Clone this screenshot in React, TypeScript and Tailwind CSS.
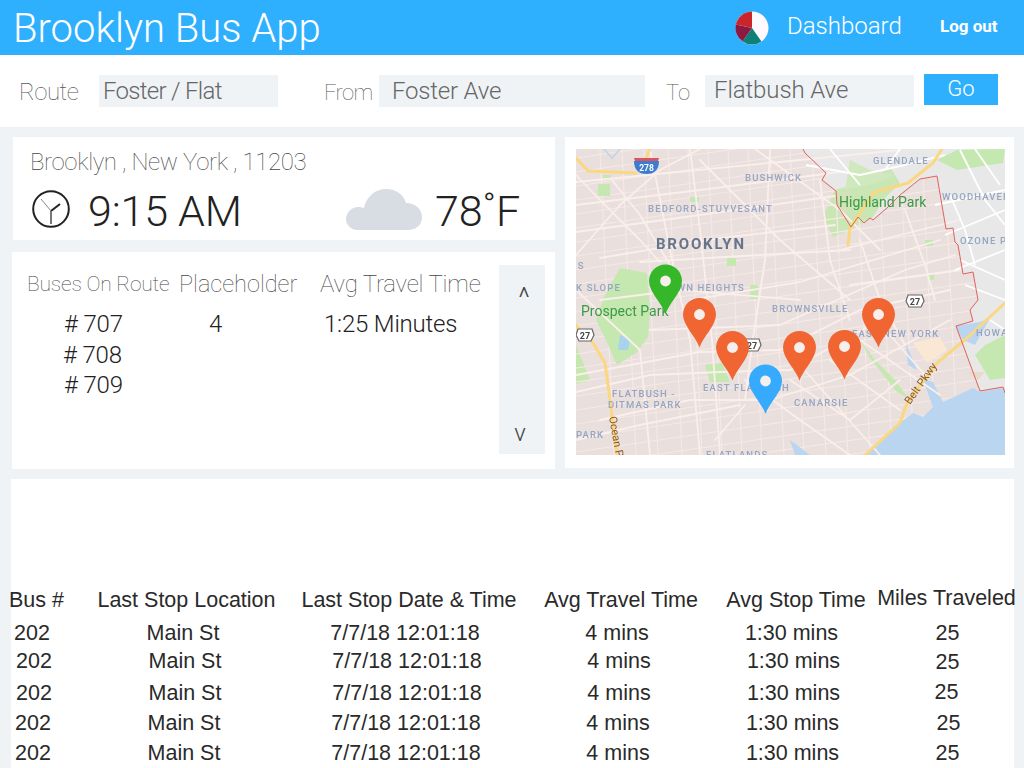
import React from "react";

const roads: string[] = [
  "M576 182L780 162L900 150","M576 205L700 190L840 172","M576 232L700 215L835 196","M600 258L720 238L835 225",
  "M640 262L760 255L850 250","M690 300L800 282L940 240","M650 330L780 325L905 270L955 255","M576 375L700 352L780 350L860 310L950 290",
  "M576 392L650 375L720 372L790 370L880 320","M600 420L690 400L770 400L850 375L950 320","M576 440L640 425L740 405",
  "M690 149L700 230L712 340L720 455","M770 149L765 260L752 345L745 400","M650 149L672 260L690 340L700 455",
  "M612 180L640 215L670 265","M576 255L620 205L660 170L700 149","M576 175L600 200L640 240L660 262","M700 160L780 240L850 300","M755 149L840 210L880 250",
  "M820 180L830 260L850 320","M860 240L880 300L905 345","M905 210L925 265L935 300",
  "M576 290L640 350L650 455","M745 405L715 440","M745 380L800 420L850 455","M790 380L850 420L900 380",
  "M830 360L900 410","M800 365L880 455","M860 340L940 395","M890 335L925 375","M840 250L960 220",
  "M850 285L960 270","M600 300L680 290L800 300",
];
const minorH: number[] = [158,172,186,200,214,228,242,256,270,284,298,312,326,340,354,368,382,396,410,424,438,452,466,480,494,508,522];
const minorV: number[] = [600,622,644,668,688,708,728,748,770,790,812,834,856,878,900,922,944];
const greyRoads: string[] = [
  "M806 165L860 175L905 165L945 155","M830 149L860 185","M935 205L1005 190","M945 235L1005 210","M955 270L1005 250","M965 285L1005 300",
  "M960 150L985 200L1005 225","M975 149L1000 185","M960 260L1005 280","M950 195L965 230L975 265","M900 149L885 170","M990 320L1005 330",
];
const labels: [string, number, number][] = [
  ["BUSHWICK",745,181],["GLENDALE",873,164],["BEDFORD-STUYVESANT",648,212],["WOODHAVEN",942,200],["OZONE P",960,244],
  ["IS",574,269],["K SLOPE",576,291],["BROWNSVILLE",772,312],["EAST NEW YORK",852,337],["HOWA",976,336],
  ["FLATBUSH -",612,397],["DITMAS PARK",608,408],["EAST FLATBUSH",703,391],["CANARSIE",794,406],["PARK",576,438],["FLATLANDS",706,458],
];
const pins: [number, number, string][] = [
  [665.5,281,"#35b729"],[699.5,314.5,"#f06531"],[732.5,347.5,"#f06531"],[799.5,347.5,"#f06531"],[844.5,346.5,"#f06531"],[878.5,314.5,"#f06531"],[765.5,381,"#35aaff"],
];
const boundary = "M803 149L805 153L826 173L822 180L836 191L837 205L851 227L858 217L864 223L870 218L873 220L887 208L900 195L920 179L937 176L946 229L953 228L955 242L958 245L963 274L973 272L978 300L970 310L973 321L956 326L980 391L1003 387L1005 393";

function Shield({ x, y }: { x: number; y: number }) {
  return (
    <g>
      <path d={`M${x-7} ${y-6}h14l2 6l-3 6h-12l-3-6z`} fill="#fff" stroke="#666" strokeWidth="1.2" />
      <text x={x} y={y+3.5} textAnchor="middle" fontSize="9" fontWeight="700" fill="#444" fontFamily="Roboto, sans-serif">27</text>
    </g>
  );
}

function BusMap() {
  return (
    <svg viewBox="576 149 429 306" className="w-[429px] h-[306px] block">
      <defs>
        <filter id="soft"><feGaussianBlur stdDeviation="0.5" /></filter>
        <clipPath id="bk"><path d={`${boundary}V455H576V149Z`} /></clipPath>
      </defs>
      <g filter="url(#soft)">
        <rect x="576" y="149" width="429" height="306" fill="#e9dfdd" />
        <path d={`${boundary}V149Z`} fill="#e8e8e8" />
        <path d="M823 217L835 190L870 180L890 167L900 183L883 200L873 217L850 230L833 237Z" fill="#c9e6b4" />
        <path d="M840 218L838 195L850 190L846 220Z" fill="#d6e0ba" />
        <path d="M937 160L957 150L1005 149L1003 163L957 170Z" fill="#c5e8b0" />
        <path d="M850 160L870 170L895 175L870 185L845 190Z" fill="#cfe8bd" />
        <path d="M576 345L590 380L576 384Z" fill="#c5e8b0" />
        <g clipPath="url(#bk)" fill="none" stroke="#f6e9e6" strokeWidth="1.1">
          {minorH.map((y) => <path key={y} d={`M576 ${y}L1005 ${y-62}`} />)}
          {minorV.map((x) => <path key={x} d={`M${x} 149L${x+14} 455`} />)}
        </g>
        <path d="M620 268L647 273L650 310L648 337L637 352L617 365L606 340L596 320L605 295Z" fill="#c5e8b0" />
        <path d="M705 365L722 363L730 382L710 382Z" fill="#c5e8b0" />
        <path d="M598 184h12v12h-12z M690 197h9v5h-9z M727 258h9v8h-9z M750 285h8v14h-8z M925 240h8v6h-8z M928 274h6v6h-6z M603 175h8v4h-8z" fill="#c5e8b0" />
        <path d="M860 340L870 358L897 392L908 398L895 380L875 360Z" fill="#c5e8b0" />
        <path d="M913 343L940 337L947 350L927 363Z" fill="#fbe8d4" />
        <path d="M865 455L900 423L913 413L923 417L933 407L923 380L933 382L943 402L973 388L980 392L1003 388L1005 393V455Z" fill="#b9d5f0" />
        <path d="M955 326L980 322L990 318L975 345L963 340Z" fill="#b9d5f0" />
        <path d="M906 343L917 370L908 365Z M790 440L810 455H795Z" fill="#b9d5f0" />
        <path d="M985 345L1005 335V378L990 380L975 355Z" fill="#c5e8b0" />
        <path d="M620 335L630 340L628 350L618 350Z" fill="#a9d3ec" />
        <path d="M604 149L612 158L620 149" fill="none" stroke="#b9d5f0" strokeWidth="1.5" />
        <path d="M968 372L985 372L978 380Z" fill="#e7dcc8" />
        <g fill="none" stroke="#fbefec" strokeWidth="1.8" strokeLinecap="round" strokeLinejoin="round">
          {roads.map((d) => <path key={d} d={d} />)}
        </g>
        <g fill="none" stroke="#ffffff" strokeWidth="1.8" strokeLinejoin="round">
          {greyRoads.map((d) => <path key={d} d={d} />)}
        </g>
        <g fill="none" stroke="#fbd780" strokeWidth="3" strokeLinecap="round" strokeLinejoin="round">
          <path d="M576 158L588 171L636 173" />
          <path d="M645 160L650 149" />
          <path d="M942 149L933 163L908 183L873 193L862 210L850 228L848 245" />
          <path d="M865 455L900 423L907 403L937 363L967 338L1005 303" />
          <path d="M576 325L593 343L605 363L610 400L617 455" />
        </g>
        <path d={boundary} fill="none" stroke="#e0625e" strokeWidth="1" />
        <g>
          <path d="M634 158h25l-1 3h-23z" fill="#d9545e" />
          <path d="M634 161h25c0 10-6 13-12.500 13s-12.500-3-12.500-13z" fill="#3b7bd0" />
          <text x="646.500" y="171" textAnchor="middle" fontSize="8.500" fontWeight="700" fill="#fff" fontFamily="Roboto, sans-serif">278</text>
        </g>
        <Shield x={585} y={335} />
        <Shield x={915} y={301} />
        <Shield x={752} y={345} />
        <g fontFamily="Roboto, sans-serif" fontSize="9.500" fontWeight="500" fill="#95a5c2" letterSpacing="1.150">
          {labels.map(([t, x, y]) => <text key={t} x={x} y={y}>{t}</text>)}
          <text x="745" y="291" textAnchor="end">CROWN HEIGHTS</text>
        </g>
        <text x="656" y="249" fontFamily="Roboto, sans-serif" fontSize="15" fontWeight="700" letterSpacing="1.800" fill="#65758c">BROOKLYN</text>
        <text x="839" y="207" fontFamily="Roboto, sans-serif" fontSize="14" fill="#3c9a45">Highland Park</text>
        <text x="581" y="316" fontFamily="Roboto, sans-serif" fontSize="14" fill="#3c9a45">Prospect Park</text>
        <text transform="translate(609 417) rotate(80)" fontFamily="Roboto, sans-serif" fontSize="11" fill="#8a5a2a">Ocean P</text>
        <text transform="translate(910 405) rotate(-55)" fontFamily="Roboto, sans-serif" fontSize="11" fill="#8a5a2a">Belt Pkwy</text>
      </g>
      {pins.map(([x, y, c]) => (
        <g key={`${x}-${y}`} transform={`translate(${x} ${y})`}>
          <path d="M0 33C-3 23-16.500 11-16.500 0A16.500 16.500 0 1 1 16.500 0C16.500 11 3 23 0 33Z" fill={c} />
          <circle r="5.400" fill="#f7efec" />
        </g>
      ))}
    </svg>
  );
}

function Pie() {
  return (
    <svg viewBox="0 0 34 34" className="w-[34px] h-[34px]">
      <circle cx="17" cy="17" r="16.500" fill="#fdf9fe" />
      <path d="M17 17L26.500 30.500A16.500 16.500 0 0 1 7.500 30.500Z" fill="#0f8077" />
      <path d="M17 17L7.500 30.500A16.500 16.500 0 0 1 .8 13.500Z" fill="#8b1a42" />
      <path d="M17 17L.8 13.500A16.500 16.500 0 0 1 17 .5Z" fill="#c9252d" />
    </svg>
  );
}

function Clock() {
  return (
    <svg viewBox="0 0 38 38" className="w-[38px] h-[38px]">
      <circle cx="19" cy="19" r="17.800" fill="none" stroke="#222" strokeWidth="2" />
      <path d="M19 21L28 14" stroke="#222" strokeWidth="2" />
      <path d="M19 21L9 9" stroke="#888" strokeWidth="1" />
      <path d="M19 21V34" stroke="#777" strokeWidth="2" />
    </svg>
  );
}

function Cloud() {
  return (
    <svg viewBox="0 0 76 41" className="w-[76px] h-[41px]">
      <path d="M12 41C5 41 0 36 0 30C0 23 6 18 12 18C14 18 16 18 18 19C20 8 29 0 40 0C50 0 58 6 60 14C69 14 76 20 76 28C76 36 70 41 62 41Z" fill="#d8dde3" />
    </svg>
  );
}

export default function App() {
  return (
    <div className="w-[1024px] h-[768px] overflow-hidden bg-[#eff3f6] font-[Roboto,sans-serif] text-[#222]">
      <header className="h-[55px] bg-[#2fb0ff] flex items-center text-white">
        <h1 className="ml-[13px] text-[40px] font-light leading-none w-[722px] mt-[2px]">Brooklyn Bus App</h1>
        <Pie />
        <span className="ml-[18px] text-[24px] font-light w-[153px] -mt-[4px]">Dashboard</span>
        <span className="text-[17px] font-bold -mt-[2px]">Log out</span>
      </header>

      <section className="h-[72px] bg-white flex items-center">
        <span className="ml-[19px] w-[80px] text-[24px] font-thin text-[#555] tracking-[-0.5px] mt-[2px]">Route</span>
        <div className="w-[179px] h-[32px] bg-[#eff3f6] pl-[4px] text-[24px] font-light text-[#666] leading-[33px] tracking-[-0.7px]">Foster / Flat</div>
        <span className="ml-[46px] w-[55px] text-[22px] font-thin text-[#555] tracking-[-0.7px] mt-[2px]">From</span>
        <div className="w-[266px] h-[32px] bg-[#eff3f6] pl-[13px] text-[24px] font-light text-[#666] leading-[32px] tracking-[-0.2px]">Foster Ave</div>
        <span className="ml-[21px] w-[39px] text-[22px] font-thin text-[#555] mt-[2px]">To</span>
        <div className="w-[209px] h-[32px] bg-[#eff3f6] pl-[9px] text-[24px] font-light text-[#666] leading-[30px] tracking-[-0.1px]">Flatbush Ave</div>
        <button className="ml-[10px] w-[74px] h-[31px] -mt-[4px] bg-[#2fb0ff] text-white text-[22px] font-light leading-none">Go</button>
      </section>

      <main className="flex gap-[10px] mt-[10px] ml-[12px]">
        <div className="w-[543px] flex flex-col gap-[12px]">
          <div className="h-[103px] w-[542px] ml-[1px] bg-white pl-[19px] pt-[9px]">
            <div className="-ml-[2px] text-[24px] font-thin text-[#444] leading-[32px] tracking-[-0.37px]">Brooklyn , New York , 11203</div>
            <div className="flex items-center mt-[9px] h-[44px]">
              <Clock />
              <span className="ml-[18px] w-[258px] text-[43px] font-light leading-none mt-[4px] tracking-[-0.2px]">9:15 AM</span>
              <Cloud />
              <span className="ml-[13px] text-[43px] font-light leading-none mt-[4px]">78˚F</span>
            </div>
          </div>
          <div className="h-[217px] bg-white flex">
            <div className="w-[487px] pt-[17px]">
              <div className="flex items-center h-[32px] font-thin text-[#444] whitespace-nowrap">
                <span className="ml-[15px] w-[152px] text-[21px] tracking-[-0.2px]">Buses On Route</span>
                <span className="w-[141px] text-[23.500px]">Placeholder</span>
                <span className="text-[24px] -mt-[2px] tracking-[-0.2px]">Avg Travel Time</span>
              </div>
              <div className="flex mt-[8px] text-[24px] font-light">
                <div className="ml-[52px] w-[130px] flex flex-col tracking-[-0.2px]">
                  <span className="h-[31px] leading-[31px]"># 707</span>
                  <span className="h-[30px] leading-[30px] -ml-[1px]"># 708</span>
                  <span className="h-[30px] leading-[30px]"># 709</span>
                </div>
                <span className="w-[117px] ml-[15px] leading-[31px]">4</span>
                <span className="-ml-[2px] leading-[31px] tracking-[-0.2px]">1:25 Minutes</span>
              </div>
            </div>
            <div className="mt-[13px] w-[46px] h-[189px] bg-[#eff3f6] flex flex-col justify-between items-center font-light text-[#444] pt-[18px] pb-[6px]">
              <span className="text-[28px] leading-[30px] ml-[4px]">^</span>
              <span className="text-[24px] leading-[30px] -ml-[4px]">v</span>
            </div>
          </div>
        </div>
        <div className="w-[449px] h-[331px] bg-white pt-[12px] pl-[11px]">
          <BusMap />
        </div>
      </main>

      <section className="mt-[10px] ml-[11px] w-[1003px] h-[289px] bg-white">
        <div className="-ml-[11px] w-[1025px] pt-[105px] text-[21.500px] font-['Liberation_Sans',sans-serif] text-[#2a2a2a] whitespace-nowrap text-center">
          <div className="grid grid-cols-[73px_227px_218px_206px_144px_157px] h-[33px] items-center">
            <span>Bus #</span>
            <span>Last Stop Location</span>
            <span>Last Stop Date &amp; Time</span>
            <span>Avg Travel Time</span>
            <span>Avg Stop Time</span>
            <span className="-mt-[4px]">Miles Traveled</span>
          </div>
          <div className="grid grid-cols-[64px_238px_206px_218px_131px_167px] h-[28px] items-center">
            <span>202</span><span>Main St</span><span>7/7/18 12:01:18</span><span>4 mins</span><span>1:30 mins</span><span className="pl-[14px]">25</span>
          </div>
          <div className="grid grid-cols-[64px_238px_206px_218px_131px_167px] h-[28px] items-center ml-[2px] -mt-[1px]">
            <span>202</span><span>Main St</span><span>7/7/18 12:01:18</span><span>4 mins</span><span>1:30 mins</span><span className="pl-[10px] mt-[2px]">25</span>
          </div>
          <div className="grid grid-cols-[64px_238px_206px_218px_131px_167px] h-[28px] items-center ml-[2px] mt-[5px]">
            <span>202</span><span>Main St</span><span>7/7/18 12:01:18</span><span>4 mins</span><span>1:30 mins</span><span className="pl-[8px] -mt-[2px]">25</span>
          </div>
          <div className="grid grid-cols-[64px_238px_206px_218px_131px_167px] h-[28px] items-center ml-[1px] mt-[2px]">
            <span>202</span><span>Main St</span><span>7/7/18 12:01:18</span><span>4 mins</span><span>1:30 mins</span><span className="pl-[14px]">25</span>
          </div>
          <div className="grid grid-cols-[64px_238px_206px_218px_131px_167px] h-[28px] items-center ml-[1px] mt-[2px]">
            <span>202</span><span>Main St</span><span>7/7/18 12:01:18</span><span>4 mins</span><span>1:30 mins</span><span className="pl-[12px]">25</span>
          </div>
        </div>
      </section>
    </div>
  );
}
